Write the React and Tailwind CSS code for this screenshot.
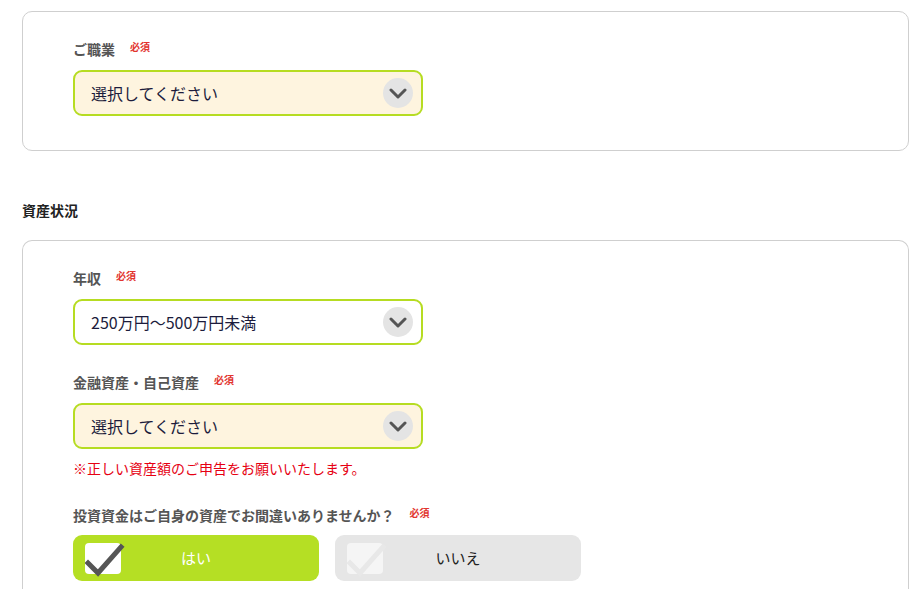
import React from 'react'

const font = { fontFamily: '"Noto Sans CJK JP", "Noto Sans", sans-serif' }

function Required() {
  return <span className="ml-[15px] relative -top-[3px] text-[10px] font-bold text-[#e2352f]">必須</span>
}

function Label({ children }) {
  return (
    <div className="flex items-center h-[20px] text-[14px] font-bold text-[#555]">
      <span>{children}</span>
      <Required />
    </div>
  )
}

function Chevron() {
  return (
    <span className="flex items-center justify-center w-[30px] h-[30px] rounded-full bg-[#e4e4e4]">
      <svg width="18" height="11" viewBox="0 0 18 11" fill="none">
        <path d="M2 2 L9 9 L16 2" stroke="#555" strokeWidth="3" strokeLinecap="round" strokeLinejoin="round" />
      </svg>
    </span>
  )
}

function Select({ value, filled }) {
  return (
    <div
      className={
        'flex items-center justify-between w-[350px] h-[46px] rounded-[9px] border-2 border-[#b6dc22] pl-[16px] pr-[8px] text-[16px] text-[#1c1c3c] ' +
        (filled ? 'bg-white' : 'bg-[#fef4df]')
      }
    >
      <span>{value}</span>
      <Chevron />
    </div>
  )
}

function Check({ active }) {
  return (
    <span className="relative block w-[36px] h-[31px] ml-[12px]">
      <span className={'absolute inset-0 rounded-[4px] ' + (active ? 'bg-white' : 'bg-[#f5f5f5]')} />
      <svg className="absolute left-0 -top-[8px]" width="40" height="42" viewBox="0 0 40 42" fill="none">
        <path d="M3 28 L13 38 L36 12" stroke={active ? '#555' : '#e8e8e8'} strokeWidth="5" strokeLinecap="square" />
      </svg>
    </span>
  )
}

function Choice({ label, active }) {
  return (
    <div
      className={
        'relative flex items-center w-[246px] h-[46px] rounded-[9px] ' +
        (active ? 'bg-[#b5df24] text-white' : 'bg-[#e6e6e6] text-[#222]')
      }
    >
      <Check active={active} />
      <span className="absolute inset-0 flex items-center justify-center text-[15px]">{label}</span>
    </div>
  )
}

export default function App() {
  return (
    <div className="bg-white min-h-[589px] w-[921px] overflow-hidden pt-[11px] pl-[22px] pr-[12px]" style={font}>
      <div className="border border-[#cfcfcf] rounded-[10px] pl-[50px] pt-[27px] pb-[34px]">
        <Label>ご職業</Label>
        <div className="mt-[11px]">
          <Select value="選択してください" />
        </div>
      </div>

      <div className="mt-[49px] h-[20px] flex items-center text-[14px] font-bold text-[#222]">資産状況</div>

      <div className="mt-[20px] border border-[#cfcfcf] rounded-t-[10px] border-b-0 pl-[50px] pt-[27px] pb-[20px]">
        <Label>年収</Label>
        <div className="mt-[11px]">
          <Select value="250万円〜500万円未満" filled />
        </div>

        <div className="mt-[27px]">
          <Label>金融資産・自己資産</Label>
        </div>
        <div className="mt-[11px]">
          <Select value="選択してください" />
        </div>
        <div className="mt-[9px] h-[20px] flex items-center text-[14px] text-[#e60012]">※正しい資産額のご申告をお願いいたします。</div>

        <div className="mt-[27px]">
          <Label>投資資金はご自身の資産でお間違いありませんか？</Label>
        </div>
        <div className="mt-[10px] flex gap-[16px]">
          <Choice label="はい" active />
          <Choice label="いいえ" />
        </div>
      </div>
    </div>
  )
}
